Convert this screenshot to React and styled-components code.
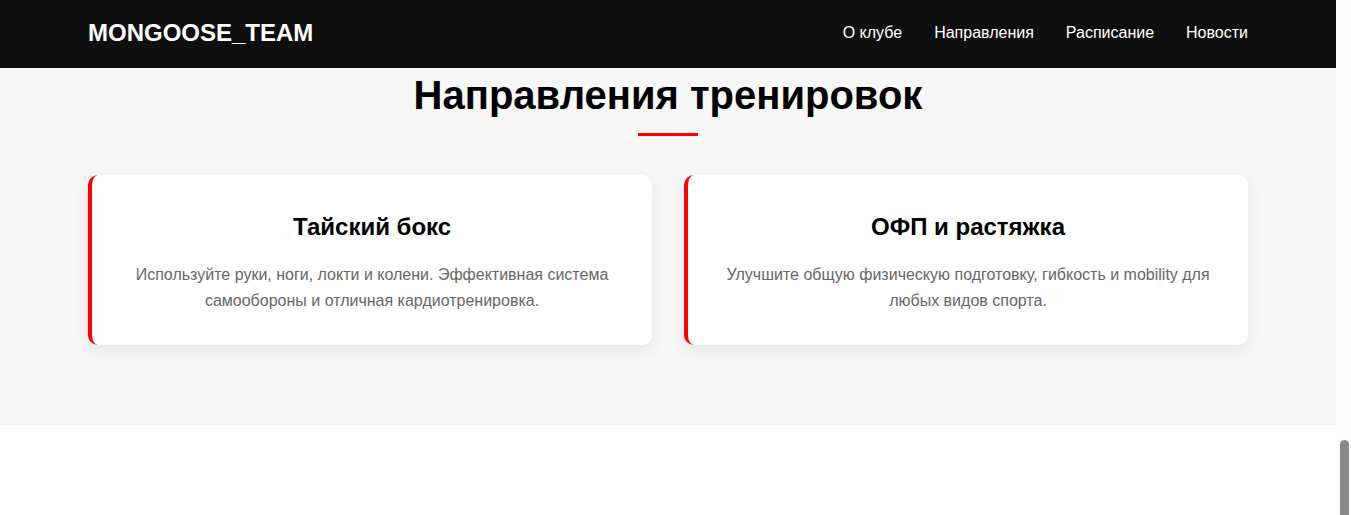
import React from "react";
import styled, { createGlobalStyle } from "styled-components";

const GlobalStyle = createGlobalStyle`
  body {
    margin: 0 15px 0 0;
    font-family: "Liberation Sans", Arial, sans-serif;
    background: #fff;
    color: #111;
  }
  * {
    box-sizing: border-box;
  }
`;

const Header = styled.header`
  position: fixed;
  top: 0;
  left: 0;
  right: 15px;
  z-index: 10;
  background-color: #0f0f0f;
  padding: 19px 0 21px;
`;

const Container = styled.div`
  max-width: 1200px;
  margin: 0 auto;
  padding: 0 20px;
`;

const HeaderInner = styled(Container)`
  display: flex;
  align-items: center;
  justify-content: space-between;
`;

const Logo = styled.div`
  color: #fff;
  font-size: 24px;
  font-weight: 700;
`;

const Nav = styled.nav`
  display: flex;
  gap: 32px;
`;

const NavLink = styled.a`
  color: #fff;
  font-size: 16px;
  text-decoration: none;
  cursor: pointer;

  &:hover {
    color: #ff0000;
  }
`;

const DirectionsSection = styled.section`
  background-color: #f7f7f7;
  padding: 73px 0 80px;
`;

const SectionTitle = styled.h2`
  margin: 0 0 39px;
  text-align: center;
  font-size: 40px;
  font-weight: 700;
  color: #000;

  &::after {
    content: "";
    display: block;
    width: 60px;
    height: 3px;
    margin: 15px auto 0;
    background-color: #ff0000;
  }
`;

const CardGrid = styled.div`
  display: grid;
  grid-template-columns: repeat(2, 1fr);
  gap: 32px;
`;

const Card = styled.div`
  background-color: #fff;
  border-left: 4px solid #ff0000;
  border-radius: 10px;
  padding: 38px 30px 32px;
  text-align: center;
  box-shadow: 0 5px 15px rgba(0, 0, 0, 0.08);
`;

const CardTitle = styled.h3`
  margin: 0 0 21px;
  font-size: 24px;
  font-weight: 700;
  color: #000;
`;

const CardText = styled.p`
  margin: 0;
  font-size: 16px;
  line-height: 1.6;
  color: #666;
`;

const BottomArea = styled.div`
  height: 90px;
  background-color: #fff;
`;

// browser scrollbar, page scrolled to the bottom
const ScrollTrack = styled.div`
  position: fixed;
  top: 0;
  right: 0;
  bottom: 0;
  width: 15px;
  background-color: #fcfcfc;
  display: flex;
  flex-direction: column;
  justify-content: flex-end;
  align-items: center;
`;

const ScrollThumb = styled.div`
  width: 9px;
  height: 75px;
  margin-left: 2px;
  border-radius: 5px 5px 0 0;
  background-color: #8a8a8a;
`;

const links = ["О клубе", "Направления", "Расписание", "Новости"];

const directions = [
  {
    title: "Тайский бокс",
    text: "Используйте руки, ноги, локти и колени. Эффективная система самообороны и отличная кардиотренировка.",
  },
  {
    title: "ОФП и растяжка",
    text: "Улучшите общую физическую подготовку, гибкость и mobility для любых видов спорта.",
  },
];

const App = () => (
  <>
    <GlobalStyle />
    <Header>
      <HeaderInner>
        <Logo>MONGOOSE_TEAM</Logo>
        <Nav>
          {links.map((link) => (
            <NavLink key={link}>{link}</NavLink>
          ))}
        </Nav>
      </HeaderInner>
    </Header>
    <DirectionsSection>
      <Container>
        <SectionTitle>Направления тренировок</SectionTitle>
        <CardGrid>
          {directions.map((item) => (
            <Card key={item.title}>
              <CardTitle>{item.title}</CardTitle>
              <CardText>{item.text}</CardText>
            </Card>
          ))}
        </CardGrid>
      </Container>
    </DirectionsSection>
    <BottomArea />
    <ScrollTrack>
      <ScrollThumb />
    </ScrollTrack>
  </>
);

export default App;
